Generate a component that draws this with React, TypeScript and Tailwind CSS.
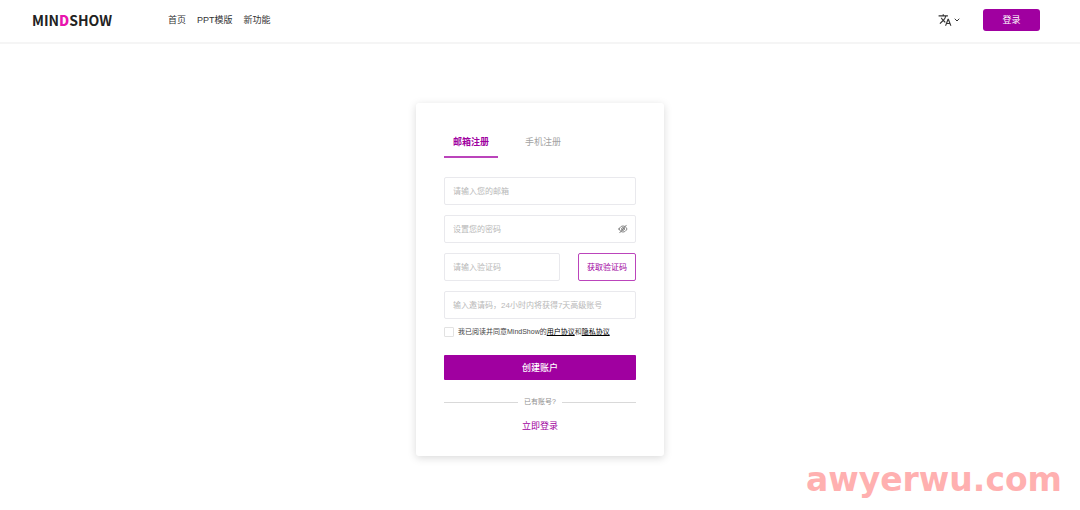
import React, { useState } from "react";
import { MdTranslate } from "react-icons/md";
import { ChevronDown } from "lucide-react";

const navLinks = ["首页", "PPT模版", "新功能"];
const tabs = ["邮箱注册", "手机注册"];

const fieldClass =
  "h-7 w-full min-w-0 rounded-xs border border-[#e9e9ed] bg-white px-2 text-[8px] text-[#333333] placeholder:text-[#b8b8b8] outline-none focus:border-[#a000a0]";

const EyeOffIcon = () => (
  <svg className="size-2.5" viewBox="0 0 20 20" fill="none" stroke="currentColor" strokeWidth={1.8} strokeLinecap="round">
    <path d="M2 10c2-3.900 4.700-6 8-6s6 2.100 8 6c-2 3.900-4.700 6-8 6S4 13.900 2 10z" />
    <circle cx="10" cy="10" r="2.800" />
    <path d="M16.500 2.500l-13 15" />
  </svg>
);

const Header: React.FC = () => (
  <header className="flex h-11 items-center border-b-2 border-[#f5f5f5] pr-10 pb-0.5 pl-8">
    <a
      href="#"
      className="w-[136px] font-['Noto_Sans_CJK_SC',sans-serif] text-[14px] leading-5 font-bold text-[#222222]"
    >
      MIN<span className="font-black text-[#e815ae]">D</span>SHOW
    </a>

    <nav className="flex flex-1 gap-[11px] pt-0.5">
      {navLinks.map((label) => (
        <a key={label} href="#" className="text-[9px] text-[#333333]">
          {label}
        </a>
      ))}
    </nav>

    <button type="button" aria-label="语言" className="mr-[22px] flex items-center gap-px text-[#333333]">
      <MdTranslate className="size-3.5" />
      <ChevronDown className="size-2" strokeWidth={3} />
    </button>
    <button type="button" className="h-[22px] w-[57px] rounded-[3px] bg-[#a000a0] pt-0.5 text-[9px] text-white">
      登录
    </button>
  </header>
);

const SignUpCard: React.FC = () => {
  const [activeTab, setActiveTab] = useState(0);

  return (
    <section className="w-[248px] rounded-[3px] bg-white px-7 pt-6 pb-6 shadow-[0_2px_8px_rgba(0,0,0,0.15)]">
      {/* Tabs */}
      <div role="tablist" className="mb-[19px] flex gap-[18px]">
        {tabs.map((label, index) => (
          <button
            key={label}
            type="button"
            role="tab"
            aria-selected={index === activeTab}
            onClick={() => setActiveTab(index)}
            className={
              index === activeTab
                ? "h-[31px] border-b-2 border-[#bb44bb] px-[9px] pt-0.5 text-[9px] font-bold text-[#a000a0]"
                : "h-[31px] border-b-2 border-transparent px-[9px] pt-0.5 text-[9px] text-[#a3a3a3]"
            }
          >
            {label}
          </button>
        ))}
      </div>

      <form onSubmit={(e) => e.preventDefault()}>
        <div className="flex flex-col gap-2.5">
          <input type="email" aria-label="邮箱" placeholder="请输入您的邮箱" className={fieldClass} />
          <div className="relative flex">
            <input type="password" aria-label="密码" placeholder="设置您的密码" className={fieldClass} />
            <button
              type="button"
              aria-label="显示密码"
              className="absolute inset-y-0 right-2 flex items-center text-[#777777]"
            >
              <EyeOffIcon />
            </button>
          </div>
          <div className="flex gap-[18px]">
            <input type="text" aria-label="验证码" placeholder="请输入验证码" className={fieldClass} />
            <button
              type="button"
              className="h-7 w-[58px] shrink-0 rounded-xs border border-[#bb44bb] pt-0.5 text-[8px] text-[#a000a0]"
            >
              获取验证码
            </button>
          </div>
          <input
            type="text"
            aria-label="邀请码"
            placeholder="输入邀请码，24小时内将获得7天高级账号"
            className={fieldClass}
          />
        </div>

        {/* Agreement */}
        <div className="mt-2 flex items-center gap-1 text-[7px] leading-[10px] text-[#444444]">
          <input
            id="agree"
            type="checkbox"
            className="size-[10px] appearance-none rounded-[1px] border border-[#e2e2e2] bg-white checked:bg-[#a000a0]"
          />
          <label htmlFor="agree">
            我已阅读并同意MindShow的
            <a href="#" className="text-black underline">用户协议</a>和
            <a href="#" className="text-black underline">隐私协议</a>
          </label>
        </div>

        <button
          type="submit"
          className="mt-[18px] h-[25px] w-full rounded-[1px] bg-[#a000a0] pt-0.5 text-[9px] font-medium text-white"
        >
          创建账户
        </button>
      </form>

      <div className="mt-4 flex items-center gap-1.5 text-[7px] leading-3 text-[#909090]">
        <span className="h-px flex-1 bg-[#d9d9d9]" />
        已有账号?
        <span className="h-px flex-1 bg-[#d9d9d9]" />
      </div>
      <a href="#" className="mt-3 block text-center text-[9px] leading-3 text-[#a000a0]">
        立即登录
      </a>
    </section>
  );
};

const App: React.FC = () => (
  <div className="relative min-h-screen bg-white font-['Liberation_Sans','Noto_Sans_CJK_SC',sans-serif]">
    <Header />
    <main className="flex justify-center pt-[59px] pb-[50px]">
      <SignUpCard />
    </main>
    <p className="absolute right-[18px] bottom-2.5 font-['DejaVu_Sans',sans-serif] text-[33px] leading-10 font-bold text-[#ffb0b0]">
      awyerwu.com
    </p>
  </div>
);

export default App;
